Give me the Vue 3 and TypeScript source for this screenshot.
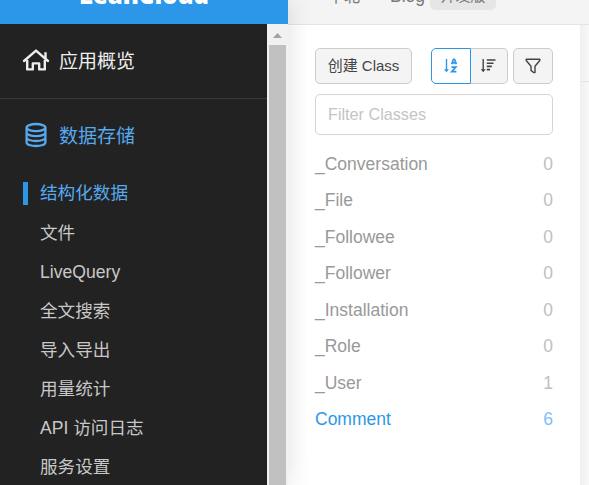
<script setup lang="ts">
interface ClassEntry {
  name: string
  count: number
  active?: boolean
}

const menu: string[] = ['结构化数据', '文件', 'LiveQuery', '全文搜索', '导入导出', '用量统计', 'API 访问日志', '服务设置']

const classes: ClassEntry[] = [
  { name: '_Conversation', count: 0 },
  { name: '_File', count: 0 },
  { name: '_Followee', count: 0 },
  { name: '_Follower', count: 0 },
  { name: '_Installation', count: 0 },
  { name: '_Role', count: 0 },
  { name: '_User', count: 1 },
  { name: 'Comment', count: 6, active: true },
]
</script>

<template>
  <div class="app">
    <aside class="sidebar">
      <div class="brand"><span>LeanCloud</span></div>
      <div class="side-body">
        <nav class="nav">
          <a class="section overview">
            <svg width="28" height="24" viewBox="0 0 28 24" fill="none" stroke="currentColor" stroke-width="2.4">
              <path d="M2 13 14 2.6 26 13" stroke-linecap="round" stroke-linejoin="round" />
              <path d="M5.2 12v9.4h5.6v-6h6.4v6h5.6V12M23.5 10V4.2" stroke-linejoin="round" />
            </svg>
            <span>应用概览</span>
          </a>
          <a class="section storage">
            <svg width="28" height="26" viewBox="0 0 28 26" fill="none" stroke="currentColor" stroke-width="2.3">
              <ellipse cx="14" cy="5.6" rx="9.4" ry="3.6" />
              <path d="M4.6 5.6v14.8c0 2 4.2 3.6 9.4 3.6s9.4-1.6 9.4-3.6V5.6M4.6 10.6c0 2 4.2 3.5 9.4 3.5s9.4-1.5 9.4-3.5M4.6 15.5c0 2 4.2 3.5 9.4 3.5s9.4-1.5 9.4-3.5" />
            </svg>
            <span>数据存储</span>
          </a>
          <ul class="menu">
            <li v-for="(item, i) in menu" :key="item" :class="{ active: i === 0 }">{{ item }}</li>
          </ul>
        </nav>
        <div class="scrollbar">
          <svg width="21" height="21" viewBox="0 0 21 21"><path d="M6 14h9l-4.5-5z" fill="#a3a3a3" /></svg>
          <div class="thumb"></div>
        </div>
      </div>
    </aside>
    <main class="main">
      <header class="topbar">
        <span class="region">华北</span>
        <span class="project">Blog</span>
        <span class="plan">开发版</span>
      </header>
      <div class="content">
        <section class="panel">
          <div class="toolbar">
            <button class="btn create">创建 Class</button>
            <div class="sorts">
              <button class="btn az">
                <svg width="26" height="20" viewBox="0 0 26 20" fill="none" stroke="currentColor">
                  <path d="M8.5 3v12" stroke-width="1.4" />
                  <path d="M6 13.2h5l-2.5 3z" fill="currentColor" stroke="none" />
                  <path d="m13.6 8.3 1.9-5h1l1.9 5M14.4 6.9h3.2" stroke-width="1.7" />
                  <path d="M13.4 11.2h4.4l-4.1 4.5h4.7" stroke-width="1.7" />
                </svg>
              </button>
              <button class="btn desc">
                <svg width="26" height="20" viewBox="0 0 26 20" fill="none" stroke="currentColor">
                  <path d="M7.2 3v12" stroke-width="1.4" />
                  <path d="M4.7 13.2h5l-2.5 3z" fill="currentColor" stroke="none" />
                  <path d="M10.8 4h8.7M10.8 7.2h6.7M10.8 10.4h5M10.8 13.6h3.2" stroke-width="1.6" />
                </svg>
              </button>
            </div>
            <button class="btn filter">
              <svg width="20" height="20" viewBox="0 0 20 20" fill="none" stroke="currentColor" stroke-width="1.4" stroke-linejoin="round">
                <path d="M3.2 3.2h13.6v1.3L12 10.2v6.3h-1.4L8 14.4v-4.2L3.2 4.5z" />
              </svg>
            </button>
          </div>
          <input class="search" type="text" placeholder="Filter Classes" />
          <ul class="classes">
            <li v-for="c in classes" :key="c.name" :class="{ active: c.active }">
              <span>{{ c.name }}</span><span class="count">{{ c.count }}</span>
            </li>
          </ul>
        </section>
        <div class="detail"><div class="detail-head"></div></div>
      </div>
    </main>
  </div>
</template>

<style>
body {
  overflow: hidden;
}
</style>

<style scoped>
* {
  box-sizing: border-box;
}
.app {
  display: flex;
  width: 589px;
  height: 485px;
  overflow: hidden;
  background: #fff;
  font-family: "Liberation Sans", "Noto Sans CJK SC", sans-serif;
}
ul {
  list-style: none;
  margin: 0;
  padding: 0;
}
.sidebar {
  flex: none;
  width: 288px;
  display: flex;
  flex-direction: column;
  z-index: 1;
  box-shadow: 0 0 24px rgba(0, 0, 0, 0.13);
}
.brand {
  flex: none;
  height: 24px;
  display: flex;
  justify-content: center;
  align-items: flex-end;
  padding-bottom: 14px;
  background: #2c97e8;
  color: #fff;
  font: 800 24px/30px "Open Sans", "Liberation Sans", sans-serif;
  overflow: hidden;
}
.side-body {
  flex: 1;
  display: flex;
  min-height: 0;
}
.nav {
  width: 267px;
  background: #222;
  overflow: hidden;
}
.section {
  display: flex;
  align-items: center;
  gap: 9px;
  padding-left: 22px;
  font-size: 19px;
}
.overview {
  height: 75px;
  padding-bottom: 3px;
  border-bottom: 1px solid #3a3a3a;
  color: #eee;
}
.storage {
  height: 75px;
  padding-bottom: 4px;
  color: #57a9ee;
}
.menu li {
  height: 39px;
  padding-left: 40px;
  font-size: 17.6px;
  line-height: 41px;
  color: #c8c8c8;
  white-space: nowrap;
}
.menu .active {
  display: flex;
  align-items: center;
  gap: 12px;
  padding-left: 23px;
  color: #57a9ee;
}
.menu .active::before {
  content: "";
  width: 5px;
  height: 23px;
  background: #2c97e8;
}
.scrollbar {
  width: 21px;
  display: flex;
  flex-direction: column;
  align-items: center;
  background: #f1f1f1;
}
.scrollbar svg {
  flex: none;
}
.thumb {
  width: 17px;
  flex: 1;
  background: #c1c1c1;
}
.main {
  flex: 1;
  display: flex;
  flex-direction: column;
  min-width: 0;
}
.topbar {
  flex: none;
  height: 25px;
  display: flex;
  align-items: flex-end;
  padding: 0 0 14px 40px;
  border-bottom: 1px solid #e5e5e5;
  background: #f4f4f4;
  color: #777;
  font-size: 16px;
  line-height: 26px;
  overflow: hidden;
}
.region {
  width: 62px;
  font-size: 16px;
}
.project {
  width: 40px;
  font-size: 17.5px;
  line-height: 27px;
}
.plan {
  width: 66px;
  height: 28px;
  border-radius: 5px;
  background: #e6e6e6;
  font-size: 15px;
  line-height: 27px;
  text-align: center;
}
.content {
  flex: 1;
  display: flex;
}
.panel {
  width: 292px;
  padding: 23px 27px 0;
  background: #fff;
}
.toolbar {
  display: flex;
  justify-content: space-between;
  gap: 5px;
  height: 36px;
}
.btn {
  display: flex;
  align-items: center;
  justify-content: center;
  padding: 0;
  height: 36px;
  border: 1px solid #ccc;
  border-radius: 5px;
  background: #f4f4f4;
  color: #444;
  font: 15px "Liberation Sans", "Noto Sans CJK SC", sans-serif;
}
.create {
  width: 97px;
  margin-right: auto;
  padding-bottom: 3px;
}
.sorts {
  display: flex;
}
.az {
  width: 40px;
  border-color: #2c97e8;
  border-radius: 5px 0 0 5px;
  background: #fff;
  color: #2c97e8;
}
.desc {
  width: 37px;
  border-left: 0;
  border-radius: 0 5px 5px 0;
}
.filter {
  width: 40px;
}
.search {
  display: block;
  width: 100%;
  height: 41px;
  margin: 10px 0 9px;
  padding: 0 12px;
  border: 1px solid #d5d5d5;
  border-radius: 5px;
  background: #fff;
  font: 16.2px "Liberation Sans", sans-serif;
  outline: none;
}
.search::placeholder {
  color: #c4c4c4;
}
.classes li {
  display: flex;
  justify-content: space-between;
  height: 36.45px;
  line-height: 40px;
  font-size: 17.5px;
  color: #999;
}
.count {
  color: #c0c0c0;
}
.classes .active {
  color: #2c97e8;
}
.active .count {
  color: #7fc0f4;
}
.detail {
  flex: 1;
  background: linear-gradient(90deg, #f0f0f0, #f8f8f8);
}
.detail-head {
  height: 57px;
  border-bottom: 1px solid #e5e5e5;
}
</style>
